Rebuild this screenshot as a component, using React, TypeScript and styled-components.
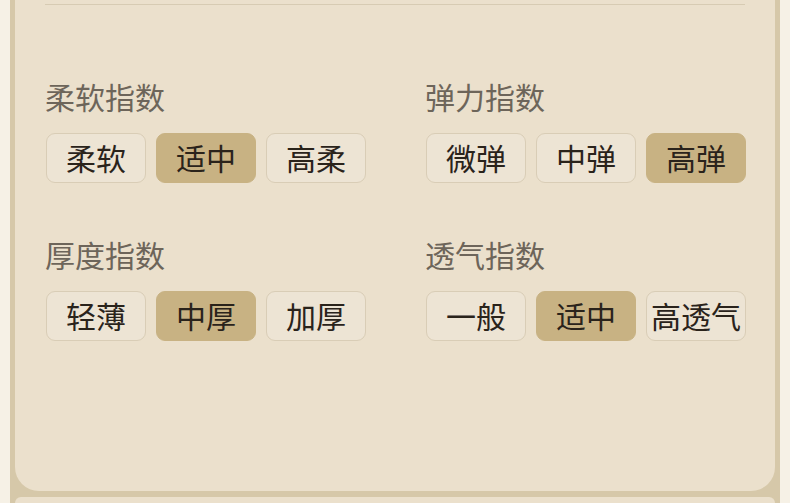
import styled, { createGlobalStyle } from "styled-components";

const GlobalStyle = createGlobalStyle`
  html, body {
    margin: 0;
    padding: 0;
    background: #f6f1e6;
    overflow: hidden;
  }
  body {
    font-family: "Noto Sans CJK SC", "Noto Sans", sans-serif;
  }
`;

type Group = {
  title: string;
  options: string[];
  selected: number;
};

const groups: Group[] = [
  { title: "柔软指数", options: ["柔软", "适中", "高柔"], selected: 1 },
  { title: "弹力指数", options: ["微弹", "中弹", "高弹"], selected: 2 },
  { title: "厚度指数", options: ["轻薄", "中厚", "加厚"], selected: 1 },
  { title: "透气指数", options: ["一般", "适中", "高透气"], selected: 1 },
];

const Frame = styled.div`
  margin: 0 10px;
  padding: 0 5px;
  height: 503px;
  background: #d6c8a9;
  display: flex;
  flex-direction: column;
  gap: 6px;
`;

const Card = styled.section`
  background: #ebe0cc;
  border-radius: 0 0 24px 24px;
  padding: 4px 30px 0;
  height: 491px;
  box-sizing: border-box;
`;

const NextCard = styled.div`
  background: #ebe0cc;
  border-radius: 26px 26px 0 0;
  flex: 1;
`;

const Divider = styled.hr`
  margin: 0;
  border: none;
  border-top: 1px solid #d7cbb3;
`;

const Grid = styled.div`
  display: grid;
  grid-template-columns: 320px 320px;
  column-gap: 60px;
  row-gap: 53px;
  padding: 73px 0 0 1px;
`;

const Field = styled.div`
  display: flex;
  flex-direction: column;
  gap: 19px;
`;

const Label = styled.div`
  font-size: 30px;
  line-height: 36px;
  color: #6d655a;
  margin-left: -1px;
`;

const Options = styled.div`
  display: flex;
  gap: 10px;
`;

const Option = styled.button<{ $active?: boolean }>`
  width: 100px;
  height: 50px;
  padding: 0 0 3px;
  box-sizing: border-box;
  border-radius: 9px;
  border: 1px solid ${(p) => (p.$active ? "#c8b283" : "#d9cdb6")};
  background: ${(p) => (p.$active ? "#c8b283" : "#ede4d4")};
  color: #2a231b;
  font-family: "Noto Sans CJK SC", "Noto Sans", sans-serif;
  font-size: 30px;
  line-height: 44px;
  white-space: nowrap;
  display: flex;
  align-items: center;
  justify-content: center;
  cursor: pointer;
`;

export default function App() {
  return (
    <>
      <GlobalStyle />
      <Frame>
        <Card>
          <Divider />
          <Grid>
            {groups.map((g) => (
              <Field key={g.title}>
                <Label>{g.title}</Label>
                <Options>
                  {g.options.map((o, i) => (
                    <Option key={o} $active={i === g.selected}>
                      {o}
                    </Option>
                  ))}
                </Options>
              </Field>
            ))}
          </Grid>
        </Card>
        <NextCard />
      </Frame>
    </>
  );
}
